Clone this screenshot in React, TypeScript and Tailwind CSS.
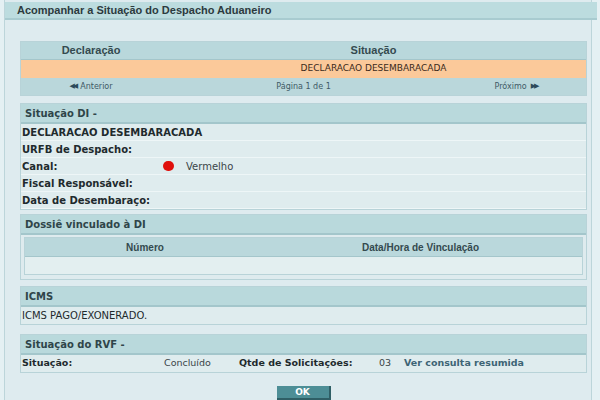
import React from "react";

const verdana = "font-['Verdana','DejaVu_Sans',sans-serif]";
const arial = "font-['Liberation_Sans','Arial',sans-serif]";

function PanelHeader({ title }: { title: string }) {
  return (
    <div className="h-[20px] bg-[#b9d9dc] border-b-2 border-[#a3c6cb] flex items-center pl-[4px] text-[10px] font-bold text-[#2f4549]">
      {title}
    </div>
  );
}

function InfoRow({
  label,
  children,
}: {
  label?: string;
  children?: React.ReactNode;
}) {
  return (
    <div className="h-[17px] flex items-center border-b border-[#eef6f7] bg-[#dfecee] pl-[1px] text-[10px] text-[#1e2a2d] whitespace-nowrap">
      <div className="w-[141px] shrink-0 font-bold">{label}</div>
      <div className="flex items-center">{children}</div>
    </div>
  );
}

export default function App() {
  return (
    <div className={`w-[600px] h-[400px] bg-[#e4f0f3] overflow-hidden ${verdana}`}>
      <div className="ml-[4px] mr-[8px] h-full border-l border-r border-[#bcd5da] bg-[#deebef] pt-[2px]">
        <div className={`h-[18px] mr-[-6px] bg-[#bcdcdf] border-b-2 border-[#a8cbd0] flex items-center pl-[12px] text-[11px] font-bold text-[#2c3a3e] ${arial}`}>
          Acompanhar a Situação do Despacho Aduaneiro
        </div>

        <div className="pl-[15px] pr-[4px] pt-[21px]">
          {/* lista de declaracoes */}
          <div className="border border-[#b8d3d8]">
            <div className={`h-[18px] flex bg-[#b9d8dc] border-b border-[#a4c6cb] text-[11px] font-bold text-[#344a4f] ${arial}`}>
              <div className="w-[140px] flex items-center justify-center">Declaração</div>
              <div className="flex-1 flex items-center justify-center">Situação</div>
            </div>
            <div className="h-[18px] flex bg-[#fbc99a] text-[9px] text-[#3a2a1a]">
              <div className="w-[140px]" />
              <div className="flex-1 flex items-center justify-center">DECLARACAO DESEMBARACADA</div>
            </div>
            <div className="h-[17px] grid grid-cols-[140px_1fr_140px] items-center bg-[#bad7db] text-[8px] text-[#3f5a66]">
              <div className="flex items-center justify-center gap-[4px]">
                <span className="text-[7px] font-bold text-[#2d4a5a] tracking-[-2px]">◀◀</span>
                <span>Anterior</span>
              </div>
              <div className="text-center">Página 1 de 1</div>
              <div className="flex items-center justify-center gap-[4px]">
                <span>Próximo</span>
                <span className="text-[7px] font-bold text-[#2d4a5a] tracking-[-2px]">▶▶</span>
              </div>
            </div>
          </div>

          {/* situacao DI */}
          <div className="mt-[7px] border border-[#b8d3d8]">
            <PanelHeader title="Situação DI -" />
            <InfoRow label="DECLARACAO DESEMBARACADA" />
            <InfoRow label="URFB de Despacho:" />
            <InfoRow label="Canal:">
              <span className="w-[11px] h-[10px] rounded-full bg-[#e0100c] mr-[12px]" />
              <span className="text-[#3a4448]">Vermelho</span>
            </InfoRow>
            <InfoRow label="Fiscal Responsável:" />
            <InfoRow label="Data de Desembaraço:" />
          </div>

          {/* dossie */}
          <div className="mt-[4px] border border-[#b8d3d8] bg-[#deebee] pb-[4px]">
            <PanelHeader title="Dossiê vinculado à DI" />
            <div className="mx-[3px] mt-[2px] border border-[#b8d3d8]">
              <div className={`h-[19px] flex bg-[#bad8dc] border-b border-[#a4c6cb] text-[10px] font-bold text-[#344a4f] ${arial}`}>
                <div className="w-[240px] flex items-center justify-center">Número</div>
                <div className="flex-1 flex items-center justify-center pr-[6px]">Data/Hora de Vinculação</div>
              </div>
              <div className="h-[17px] bg-[#e3eff0]" />
            </div>
          </div>

          {/* ICMS */}
          <div className="mt-[6px] border border-[#b8d3d8]">
            <PanelHeader title="ICMS" />
            <div className="h-[17px] flex items-center bg-[#dfecee] pl-[1px] text-[10px] text-[#1e2a2d]">
              ICMS PAGO/EXONERADO.
            </div>
          </div>

          {/* RVF */}
          <div className="mt-[9px] border border-[#b8d3d8]">
            <PanelHeader title="Situação do RVF -" />
            <div className="h-[17px] flex items-center bg-[#dfecee] pl-[1px] text-[9.5px] text-[#1e2a2d] whitespace-nowrap">
              <div className="w-[142px] font-bold">Situação:</div>
              <div className="w-[75px] text-[#3a4448]">Concluído</div>
              <div className="w-[140px] font-bold">Qtde de Solicitações:</div>
              <div className="w-[25px] text-[#3a4448]">03</div>
              <div className="font-bold text-[#3d6475]">Ver consulta resumida</div>
            </div>
          </div>

          <div className="mt-[13px] flex justify-center">
            <button className="w-[54px] h-[14px] bg-[#4d8e96] border-r-2 border-b-2 border-[#2f5f66] text-[9px] font-bold text-white flex items-center justify-center leading-none">
              OK
            </button>
          </div>
        </div>
      </div>
    </div>
  );
}
